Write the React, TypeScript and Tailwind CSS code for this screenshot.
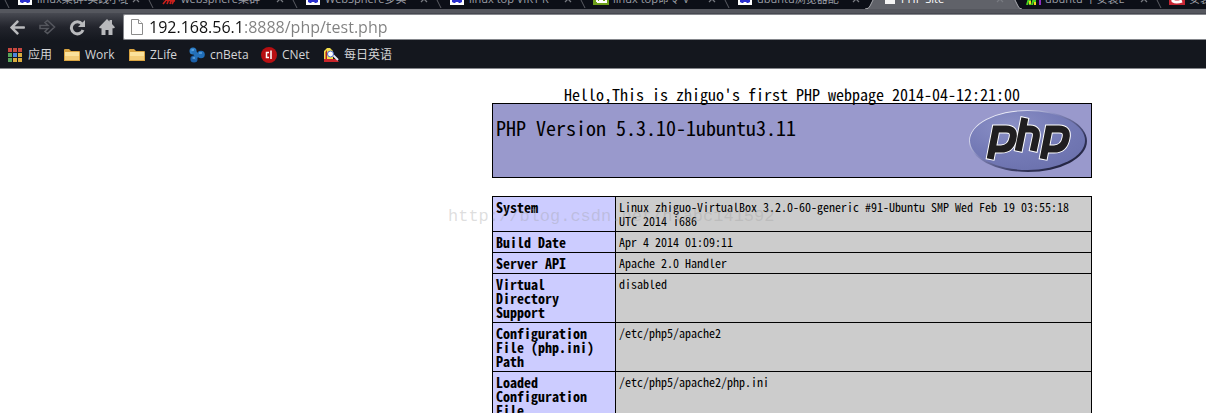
import { FaArrowLeft } from "react-icons/fa";

const tabs = [
    { title: "linux集群-实践小结", icon: "paw" },
    { title: "websphere集群", icon: "red" },
    { title: "WebSphere多实", icon: "paw" },
    { title: "linux top VIRT R", icon: "paw" },
    { title: "linux top命令 V", icon: "green" },
    { title: "ubuntu浏览器配", icon: "paw" },
    { title: "PHP Site", icon: "page", active: true },
    { title: "ubuntu 下安装L", icon: "bars" },
    { title: "安装LAMP", icon: "csdn" },
];

const rows = [
    { name: "System", value: "Linux zhiguo-VirtualBox 3.2.0-60-generic #91-Ubuntu SMP Wed Feb 19 03:55:18 UTC 2014 i686" },
    { name: "Build Date", value: "Apr 4 2014 01:09:11" },
    { name: "Server API", value: "Apache 2.0 Handler" },
    { name: "Virtual Directory Support", value: "disabled" },
    { name: "Configuration File (php.ini) Path", value: "/etc/php5/apache2" },
    { name: "Loaded Configuration File", value: "/etc/php5/apache2/php.ini" },
];

const TabIcon = ({ icon }: { icon: string }) => {
    if (icon === "red") {
        return (
            <svg className="size-4 shrink-0" viewBox="0 0 16 16">
                <path d="M2 11 L6 4 M2 15 L7 9 M6 15 L10 5 M9 15 L13 4 M5 11 L14 12 M11 15 L15 8" stroke="#c8201c" strokeWidth="1.6" fill="none" />
            </svg>
        );
    }
    if (icon === "green") {
        return (
            <svg className="size-4 shrink-0" viewBox="0 0 16 16">
                <path d="M0 0H16V16H0Z" fill="#6fa01c" />
                <path d="M4 8V13M7 8V13H4M9 8V13H13V9H10" stroke="#fff" strokeWidth="2" fill="none" />
            </svg>
        );
    }
    if (icon === "page") {
        return (
            <svg className="size-4 shrink-0" viewBox="0 0 16 16">
                <path d="M4 1H11L14 4V15H4Z" fill="#f4f4f4" />
            </svg>
        );
    }
    if (icon === "bars") {
        return (
            <svg className="size-4 shrink-0" viewBox="0 0 16 16">
                <path d="M2 16L5 6V16M7 16L10 5V16" stroke="#47d421" strokeWidth="2" fill="none" />
                <path d="M5 15V12M10 16V13" stroke="#f1d91b" strokeWidth="2" />
                <path d="M15 16V8" stroke="#8c2cc0" strokeWidth="2" />
            </svg>
        );
    }
    if (icon === "csdn") {
        return (
            <svg className="size-4 shrink-0" viewBox="0 0 16 16">
                <path d="M0 0H16V16H0Z" fill="#c72634" />
                <path d="M12 5H7Q3 8 4 12Q7 14 13 12" stroke="#fff" strokeWidth="3" fill="none" />
            </svg>
        );
    }
    return (
        <svg className="size-4 shrink-0" viewBox="0 0 16 16">
            <path d="M1 1H15V16H1Z" fill="#fff" />
            <path d="M3 7Q8 3 13 7V13L11 14H10L9 13H7L6 14H5L3 13Z" fill="#2a2fd0" />
        </svg>
    );
};

const TabStrip = () => (
    <nav className="flex h-[9px] overflow-hidden bg-[#0c0f17] pl-1 font-['Open_Sans','Noto_Sans_CJK_SC',sans-serif] text-[11px] text-[#9b9ea5]" aria-label="Tabs">
        {tabs.map((tab) => (
            <a
                key={tab.title}
                href="#"
                className={
                    tab.active
                        ? "relative flex h-[9px] w-36 shrink-0 items-end text-white"
                        : "relative flex h-[9px] w-36 shrink-0 items-end"
                }
            >
                {tab.active ? (
                    <svg className="absolute inset-0 h-[9px] w-full overflow-visible" viewBox="0 0 144 9">
                        <path d="M5 0L2 6Q1 9 -3 9H154Q151 9 150 6L147 0Z" fill="#606269" />
                        <path d="M5 0L2 6Q1 9 -3 9M147 0L150 6Q151 9 154 9" stroke="#a9abb0" fill="none" />
                    </svg>
                ) : (
                    <svg className="absolute inset-0 h-[9px] w-2" viewBox="0 0 8 9">
                        <path d="M1 0L5 8" stroke="#5b5e64" fill="none" />
                    </svg>
                )}
                <span className="relative flex w-full items-end gap-1 pb-1 pl-[13px] pr-2">
                    <TabIcon icon={tab.icon} />
                    <span className="min-w-0 grow overflow-hidden whitespace-nowrap leading-3">{tab.title}</span>
                    <svg className="mb-0.5 size-2 shrink-0" viewBox="0 0 8 8">
                        <path d="M1 1L7 7M7 1L1 7" stroke="#777a80" strokeWidth="1.3" />
                    </svg>
                </span>
            </a>
        ))}
    </nav>
);

const Toolbar = () => (
    <div className="flex h-8 items-center border-t-4 border-[#55575e] bg-linear-to-b from-[#484a52] via-[#22242c] to-[#14171e]">
        <div className="flex w-[123px] shrink-0 items-center gap-3 pl-2 text-[#b9babd]">
            <button aria-label="Back" className="flex w-[18px] justify-center">
                <FaArrowLeft size={17} />
            </button>
            <button aria-label="Forward" className="flex w-[18px] justify-center">
                <svg width="17" height="16" viewBox="0 0 17 16" fill="none" stroke="#54565d" strokeWidth="1.6">
                    <path d="M1 6.5H9L6 3.5L8.5 1.5L15.5 8L8.5 14.5L6 12.5L9 9.5H1Z" />
                </svg>
            </button>
            <button aria-label="Reload" className="flex w-[18px] justify-center">
                <svg width="17" height="17" viewBox="0 0 17 17" fill="none">
                    <path d="M13 5A6 6 0 1 0 14 11" stroke="currentColor" strokeWidth="3" />
                    <path d="M16 1V8H9Z" fill="currentColor" />
                </svg>
            </button>
            <button aria-label="Home" className="flex w-[18px] justify-center">
                <svg width="16" height="16" viewBox="0 0 16 16" fill="currentColor">
                    <path d="M8 0L10.5 2.6V1H13V5L16 8.2L15 9.3H13.5V16H9.5V11H6.5V16H2.5V9.3H1L0 8.2Z" />
                </svg>
            </button>
        </div>
        <div className="flex h-[26px] grow items-center gap-1.5 rounded-l-xs border-y border-l border-[#85878c] bg-white pl-[7px]">
            <svg className="shrink-0" width="12" height="16" viewBox="0 0 12 16" fill="#fff" stroke="#8b8b8b">
                <path d="M0.5 0.5H7.5L11.5 4.5V15.5H0.5Z" />
                <path d="M7.5 0.5V4.5H11.5" />
            </svg>
            <input
                aria-label="Address"
                defaultValue="192.168.56.1:8888/php/test.php"
                className="min-w-0 grow bg-[linear-gradient(to_right,#111_93px,#808080_93px)] bg-clip-text font-['Open_Sans',sans-serif] text-base leading-6 text-transparent outline-none"
            />
        </div>
    </div>
);

const Folder = () => (
    <svg width="16" height="14" viewBox="0 0 16 14">
        <path d="M0 2Q0 1 1 1H5L7 3H15Q16 3 16 4V13H0Z" fill="#d9a441" />
        <path d="M1 4H15V12H1Z" fill="#fbe29b" />
        <path d="M1 8H15V12H1Z" fill="#f3cd78" />
    </svg>
);

const Bookmarks = () => (
    <nav className="flex h-7 items-center border-b border-[#85878c] bg-[#14171e] pl-2 font-['Open_Sans','Noto_Sans_CJK_SC',sans-serif] text-xs text-[#d4d5d7]" aria-label="Bookmarks">
        <a href="#" className="flex w-14 shrink-0 items-center gap-1.5 whitespace-nowrap">
            <svg width="14" height="14" viewBox="0 0 14 14">
                <path d="M0 0H4V4H0ZM5 0H9V4H5ZM10 0H14V4H10Z" fill="#c8483f" />
                <path d="M0 5H4V9H0Z" fill="#58a55c" />
                <path d="M5 5H9V9H5Z" fill="#4c86dc" />
                <path d="M10 5H14V9H10ZM5 10H9V14H5ZM10 10H14V14H10Z" fill="#d9ac3e" />
                <path d="M0 10H4V14H0Z" fill="#58a55c" />
            </svg>
            应用
        </a>
        <a href="#" className="flex w-[65px] shrink-0 items-center gap-[5px]">
            <Folder />
            Work
        </a>
        <a href="#" className="flex w-[60px] shrink-0 items-center gap-[5px]">
            <Folder />
            ZLife
        </a>
        <a href="#" className="flex w-[72px] shrink-0 items-center gap-[5px]">
            <svg width="16" height="16" viewBox="0 0 16 16">
                <circle cx="4" cy="4" r="3.5" fill="#2c7ec8" />
                <circle cx="12" cy="7.5" r="3.8" fill="#1f6db8" />
                <circle cx="5" cy="12" r="3.6" fill="#1b5fa8" />
                <path d="M4 4L8 8L5 12M8 8H12" stroke="#2470b8" strokeWidth="4" fill="none" />
                <path d="M2.5 3H5M10 6H13M3.5 11H6" stroke="#7fbdf0" />
            </svg>
            cnBeta
        </a>
        <a href="#" className="flex w-[62px] shrink-0 items-center gap-[5px]">
            <svg width="16" height="16" viewBox="0 0 16 16">
                <circle cx="8" cy="8" r="8" fill="#b80f12" />
                <path d="M8 5.5H5.5V10.5H8M10 3.5V12" stroke="#fff" strokeWidth="1.5" fill="none" />
            </svg>
            CNet
        </a>
        <a href="#" className="flex shrink-0 items-center gap-1 whitespace-nowrap">
            <svg width="17" height="16" viewBox="0 0 17 16">
                <path d="M1 14V4L4 1H7L10 4V12H1Z" fill="#f5df4d" />
                <path d="M2.5 12V5L4 3V12Z" fill="#b3261e" />
                <path d="M1 12H13L16 15H1Z" fill="#c9252b" />
                <path d="M10 8L15 13" stroke="#e9e9f5" strokeWidth="2" />
                <circle cx="7.5" cy="7" r="3" fill="#fff" stroke="#4767c9" />
            </svg>
            每日英语
        </a>
    </nav>
);

const PhpLogo = () => (
    <svg width="120" height="67" viewBox="1 -1 120 67" role="img" aria-label="PHP logo">
        <defs>
            <linearGradient id="rim" x1="0" y1="0" x2="1" y2="1">
                <stop offset="0.2" stopColor="#e8e9f6" />
                <stop offset="0.4" stopColor="#8589bd" />
                <stop offset="0.7" stopColor="#34365c" />
                <stop offset="1" stopColor="#15162b" />
            </linearGradient>
            <radialGradient id="disc" cx="0.35" cy="0.25" r="0.8">
                <stop offset="0" stopColor="#8b90c6" />
                <stop offset="0.6" stopColor="#747ab6" />
                <stop offset="1" stopColor="#6c72ae" />
            </radialGradient>
        </defs>
        <ellipse cx="61" cy="34" rx="59" ry="31" fill="url(#rim)" />
        <ellipse cx="60.5" cy="33.5" rx="57.5" ry="29.5" fill="url(#disc)" />
        <g fill="none" stroke="#fff" strokeWidth="9">
            <path d="M23 53L29 22H39Q48 22 46 31Q44 42 34 42H26" />
            <path d="M58 10L51 45M56 22H63Q71 22 69 31L66 45" />
            <path d="M76 53L82 22H92Q101 22 99 31Q97 42 87 42H79" />
        </g>
        <g fill="none" stroke="#201e20" strokeWidth="7">
            <path d="M23.2 52L29 22H39Q48 22 46 31Q44 42 34 42H26" />
            <path d="M57.8 11L51.2 44M56 22H63Q71 22 69 31L66.2 44" />
            <path d="M76.2 52L82 22H92Q101 22 99 31Q97 42 87 42H79" />
        </g>
    </svg>
);

export default function App() {
    return (
        <div className="flex h-screen flex-col overflow-hidden bg-white font-['Noto_Sans_CJK_SC',sans-serif]">
            <header className="shrink-0">
                <TabStrip />
                <Toolbar />
                <Bookmarks />
            </header>
            <main className="relative flex flex-col pl-[492px] pt-4 font-['Noto_Sans_Mono_CJK_SC','Liberation_Mono',monospace] text-black">
                <div className="w-[600px]">
                    <p className="text-center text-base leading-[18px]">
                        Hello,This is zhiguo's first PHP webpage 2014-04-12:21:00
                    </p>
                    <div className="mb-[18px] flex h-[75px] justify-between border border-black bg-[#9999cc] px-[3px] py-0.5">
                        <h1 className="py-2.5 text-xl leading-6">PHP Version 5.3.10-1ubuntu3.11</h1>
                        <PhpLogo />
                    </div>
                    <table className="w-full table-fixed border-collapse text-left align-top text-xs leading-[14px]">
                        <colgroup>
                            <col className="w-[123px]" />
                            <col />
                        </colgroup>
                        <tbody>
                            {rows.map((row) => (
                                <tr key={row.name}>
                                    <th scope="row" className="border border-black bg-[#ccccff] p-[3px] align-top text-sm leading-[14px]">
                                        {row.name}
                                    </th>
                                    <td className="border border-black bg-[#cccccc] p-[3px] align-top">{row.value}</td>
                                </tr>
                            ))}
                        </tbody>
                    </table>
                </div>
                <span className="pointer-events-none absolute left-[448px] top-[136px] font-['Liberation_Mono',monospace] text-[17px] leading-6 text-[#a0a0a0]/35">
                    http://blog.csdn.net/hlabc141592
                </span>
            </main>
        </div>
    );
}
